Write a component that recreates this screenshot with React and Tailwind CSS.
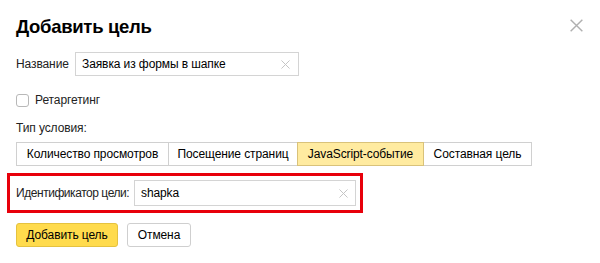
import React from "react";

const Cross = ({ size = 10, className = "" }) => (
  <svg width={size} height={size} viewBox="0 0 10 10" className={className}>
    <path d="M0.5 0.5 L9.5 9.5 M9.5 0.5 L0.5 9.5" stroke="currentColor" strokeWidth="1.1" fill="none" />
  </svg>
);

const tabs = [
  { label: "Количество просмотров", w: "w-[153px]" },
  { label: "Посещение страниц", w: "w-[130px]" },
  { label: "JavaScript-событие", w: "w-[127px]", active: true },
  { label: "Составная цель", w: "w-[109px]" },
];

const App = () => {
  return (
    <div
      className="relative w-[600px] h-[263px] bg-white overflow-hidden text-[12px] tracking-[-0.1px] text-black"
      style={{ fontFamily: '"Liberation Sans", Arial, sans-serif' }}
    >
      <button className="absolute left-[570px] top-[19px] text-[#b0b0b0]">
        <Cross size={13} />
      </button>

      <div className="flex flex-col pl-4 pt-[15px]">
        <h1 className="h-6 leading-6 text-[18.5px] tracking-[-0.3px] font-bold">Добавить цель</h1>

        <div className="mt-[13px] flex items-center h-6">
          <span className="w-[59px] text-[#222]">Название</span>
          <div className="flex items-center w-[224px] h-6 border border-[#d4d4d4] pl-[6px] pr-[8px]">
            <span className="flex-1 leading-4">Заявка из формы в шапке</span>
            <Cross size={9} className="text-[#c4c4c4]" />
          </div>
        </div>

        <div className="mt-4 flex items-center h-4">
          <span className="w-[13px] h-[13px] border border-[#b8b8b8] rounded-[3px] bg-white" />
          <span className="ml-[6px] leading-4 text-[#222]">Ретаргетинг</span>
        </div>

        <div className="mt-3 h-4 leading-4 text-[#222]">Тип условия:</div>

        <div className="mt-[6px] flex h-6">
          {tabs.map((t, i) => (
            <div
              key={t.label}
              className={`${t.w} ${i > 0 ? "-ml-px" : ""} h-6 flex items-center justify-center border ${
                t.active ? "bg-[#ffeba0] border-[#d9c27a] z-10" : "bg-white border-[#d0d0d0]"
              }`}
            >
              {t.label}
            </div>
          ))}
        </div>

        <div className="mt-[7px] -ml-[9px] w-[356px] h-10 border-[3px] border-[#e8000b] flex items-center pl-[6px] pr-[4px]">
          <span className="w-[118px] shrink-0 whitespace-nowrap tracking-[-0.45px] text-[#222]">
            Идентификатор цели:
          </span>
          <div className="flex items-center flex-1 h-[26px] border border-[#d4d4d4] pl-[6px] pr-[7px]">
            <span className="flex-1 leading-4">shapka</span>
            <Cross size={9} className="text-[#c4c4c4]" />
          </div>
        </div>

        <div className="mt-[10px] flex gap-[9px]">
          <button className="w-[102px] h-6 rounded-[3px] bg-[#ffdb4d] border border-[#e5c23f]">
            Добавить цель
          </button>
          <button className="w-[64px] h-6 rounded-[3px] bg-white border border-[#cfcfcf]">
            Отмена
          </button>
        </div>
      </div>
    </div>
  );
};

export default App;
